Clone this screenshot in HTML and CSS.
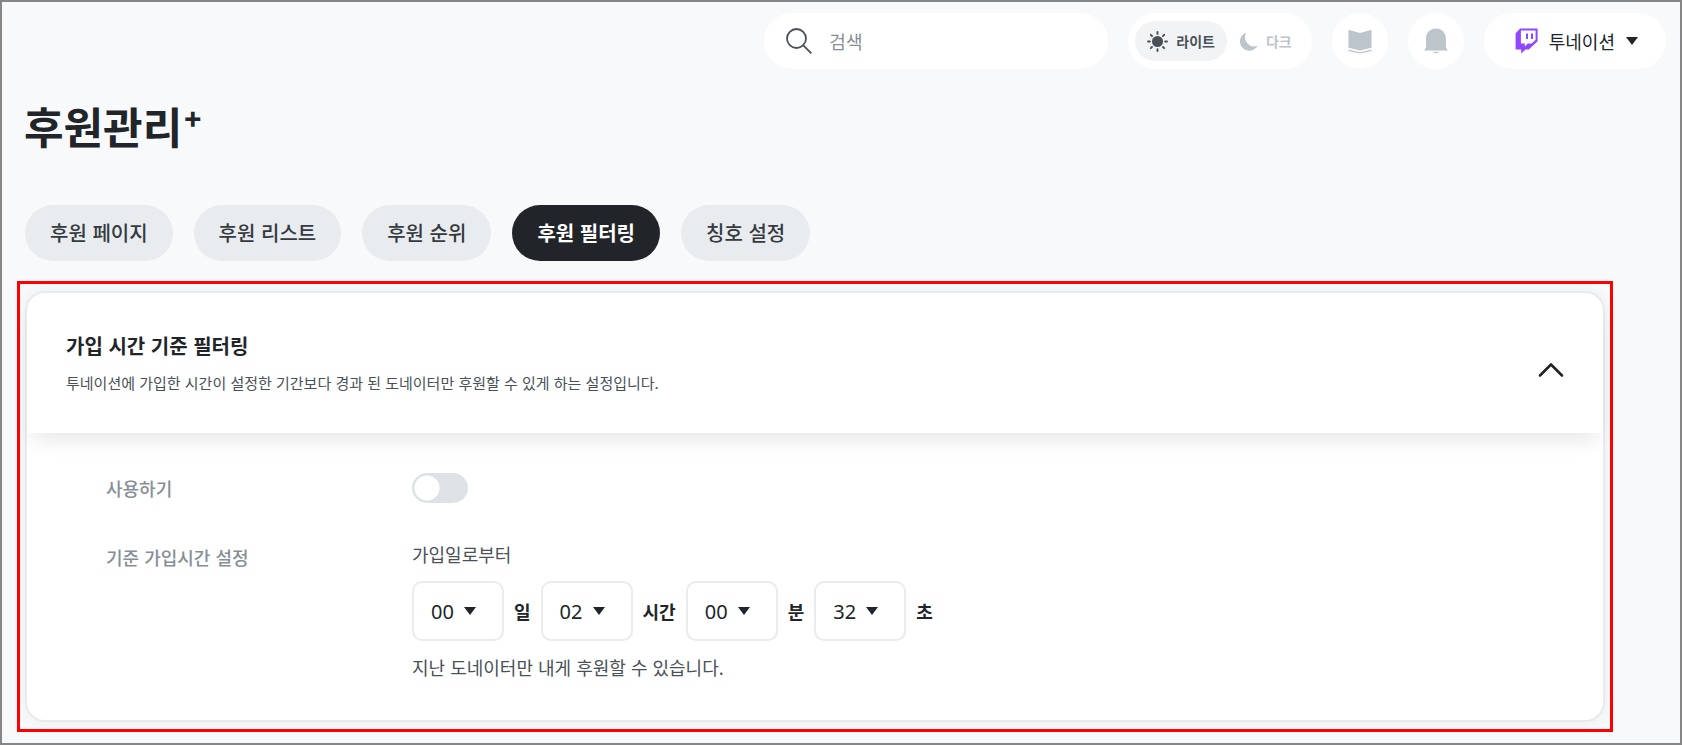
FILE: index.html
```html
<!DOCTYPE html>
<html lang="ko">
<head>
    <meta charset="UTF-8">
    <meta name="viewport" content="width=device-width, initial-scale=1.0">
    <title>후원관리</title>
    <link rel="stylesheet" href="styles.css">
</head>
<body>
    <div class="page">
        <header class="topbar">
            <label class="search">
                <svg class="search-icon" viewBox="0 0 26 26" fill="none" stroke="#495057" stroke-width="1.8">
                    <circle cx="10.5" cy="10.5" r="9.5"/>
                    <path d="M17.3 17.3L25.3 25.3"/>
                </svg>
                <input class="search-input" type="text" placeholder="검색" aria-label="검색">
            </label>

            <div class="theme">
                <button class="theme-btn active" type="button">
                    <svg width="21" height="21" viewBox="0 0 21 21" fill="#495057" stroke="#495057" stroke-width="1.9" stroke-linecap="round">
                        <circle cx="10.5" cy="10.5" r="4.6"/>
                        <path d="M10.5 1v1.9M10.5 18.1V20M1 10.5h1.9M18.1 10.5H20M3.8 3.8l1.2 1.2M16 16l1.2 1.2M17.2 3.8L16 5M5 16l-1.2 1.2"/>
                    </svg>
                    <span>라이트</span>
                </button>
                <button class="theme-btn" type="button">
                    <svg width="18" height="19" viewBox="0 0 18 19" fill="#bcc4cc">
                        <path d="M6.4 0.6A9.3 9.3 0 1 0 17.6 13.6A9 9 0 0 1 6.4 0.6z"/>
                    </svg>
                    <span>다크</span>
                </button>
            </div>

            <button class="round-btn" type="button" aria-label="가이드">
                <svg width="24" height="25" viewBox="0 0 24 25" fill="#bcc4cc">
                    <path d="M0.5 0.8L12 4L23.5 0.8V18.8L12 21.4L0.5 18.8z"/>
                    <path d="M0.5 20.5L12 23.2L23.5 20.5V21.9L12 24.6L0.5 21.9z"/>
                </svg>
            </button>
            <button class="round-btn" type="button" aria-label="알림">
                <svg width="24" height="26" viewBox="0 0 24 26" fill="#bcc4cc">
                    <path d="M2 20V11C2 4.5 6.4 0.4 12 0.4S22 4.5 22 11V20L23.5 21.2V22.4H0.5V21.2z"/>
                    <path d="M8.4 23.8h7.2A4 2.4 0 0 1 8.4 23.8z"/>
                </svg>
            </button>

            <button class="profile" type="button">
                <svg width="23" height="26" viewBox="0 0 23 26">
                    <path fill="#9146ff" fill-rule="evenodd" d="M5.2 0.6H22.6V13.2L13.8 21.6H10.6L6.2 25.6V21.6H0.6V5.2zM5.9 2.6V15.6H9.8V18.6L12.8 15.6H16.6L20.6 11.8V2.6z"/>
                    <path fill="#9146ff" d="M11 5.6h2v5.4h-2zM16 5.6h2v5.4h-2z"/>
                </svg>
                <span>투네이션</span>
                <i class="caret"></i>
            </button>
        </header>

        <h1 class="title">후원관리<sup>+</sup></h1>

        <nav class="tabs">
            <a class="tab" href="#page">후원 페이지</a>
            <a class="tab" href="#list">후원 리스트</a>
            <a class="tab" href="#rank">후원 순위</a>
            <a class="tab active" href="#filter">후원 필터링</a>
            <a class="tab" href="#badge">칭호 설정</a>
        </nav>

        <main class="highlight">
            <section class="card">
                <div class="card-header">
                    <div>
                        <h2>가입 시간 기준 필터링</h2>
                        <p>투네이션에 가입한 시간이 설정한 기간보다 경과 된 도네이터만 후원할 수 있게 하는 설정입니다.</p>
                    </div>
                    <button class="fold-btn" type="button" aria-label="접기">
                        <svg width="26" height="16" viewBox="0 0 26 16" fill="none" stroke="#212529" stroke-width="2.6" stroke-linecap="round" stroke-linejoin="round">
                            <path d="M2 13.5L13 2.5L24 13.5"/>
                        </svg>
                    </button>
                </div>

                <div class="card-body">
                    <div class="row">
                        <label class="row-label" for="use">사용하기</label>
                        <input class="switch" type="checkbox" id="use">
                    </div>
                    <div class="row">
                        <span class="row-label time-label">기준 가입시간 설정</span>
                        <div>
                            <p class="text">가입일로부터</p>
                            <div class="times">
                                <div class="select">
                                    <select id="day"><option>00</option></select>
                                    <i class="caret"></i>
                                </div>
                                <label for="day">일</label>
                                <div class="select">
                                    <select id="hour"><option>02</option></select>
                                    <i class="caret"></i>
                                </div>
                                <label for="hour">시간</label>
                                <div class="select">
                                    <select id="minute"><option>00</option></select>
                                    <i class="caret"></i>
                                </div>
                                <label for="minute">분</label>
                                <div class="select">
                                    <select id="second"><option>32</option></select>
                                    <i class="caret"></i>
                                </div>
                                <label for="second">초</label>
                            </div>
                            <p class="text">지난 도네이터만 내게 후원할 수 있습니다.</p>
                        </div>
                    </div>
                </div>
            </section>
        </main>
    </div>
</body>
</html>
```
FILE: styles.css
```css
* {
    box-sizing: border-box;
}

body {
    margin: 0;
    font-family: "Noto Sans CJK KR", sans-serif;
    color: #212529;
    background-color: #f8f9fb;
}

button,
input,
select {
    font-family: inherit;
    color: inherit;
    border: none;
    background: none;
    padding: 0;
    margin: 0;
}

button {
    cursor: pointer;
}

h1,
h2,
p {
    margin: 0;
}

.page {
    min-height: 100vh;
    border: 2px solid #868686;
    padding-bottom: 10px;
}

/* top bar */
.topbar {
    display: flex;
    justify-content: flex-end;
    gap: 20px;
    padding: 11px 14px 0;
}

.search {
    display: flex;
    align-items: center;
    gap: 17px;
    width: 344px;
    height: 56px;
    padding: 0 22px;
    border-radius: 28px;
    background-color: #fff;
}

.search-icon {
    flex: none;
    width: 26px;
    height: 26px;
}

.search-input {
    width: 100%;
    font-size: 18px;
    outline: none;
}

.search-input::placeholder {
    color: #868e96;
    opacity: 1;
}

.theme {
    display: flex;
    align-items: center;
    height: 56px;
    padding: 0 7px;
    border-radius: 28px;
    background-color: #fff;
}

.theme-btn {
    display: flex;
    align-items: center;
    gap: 8px;
    height: 40px;
    padding: 0 13px;
    border-radius: 20px;
    font-size: 14px;
    font-weight: 700;
    color: #bcc4cc;
}

.theme-btn.active {
    padding: 0 12px;
    color: #495057;
    background-color: #f1f3f5;
}

.round-btn {
    display: flex;
    align-items: center;
    justify-content: center;
    width: 56px;
    height: 56px;
    border-radius: 50%;
    background-color: #fff;
}

.profile {
    display: flex;
    align-items: center;
    gap: 11px;
    height: 56px;
    padding: 0 28px 0 31px;
    border-radius: 28px;
    font-size: 18px;
    background-color: #fff;
}

.caret {
    border: 6px solid transparent;
    border-top: 8px solid #212529;
    border-bottom: none;
}

/* title and tabs */
.title {
    padding: 25px 22px 0;
    font-size: 43px;
    line-height: 62px;
    font-weight: 700;
}

.title sup {
    padding-left: 2px;
    font-size: 28px;
    line-height: 1;
    font-weight: 900;
    vertical-align: 14px;
}

.tabs {
    display: flex;
    flex-wrap: wrap;
    gap: 21px;
    padding: 49px 23px 20px;
}

.tab {
    padding: 0 25px;
    border-radius: 28px;
    font-size: 20px;
    line-height: 56px;
    font-weight: 500;
    color: #343a40;
    text-decoration: none;
    background-color: #e9ecef;
}

.tab.active {
    font-weight: 700;
    color: #fff;
    background-color: #212529;
}

/* filtering card */
.highlight {
    margin: 0 67px 0 15px;
    padding: 7px 5px;
    border: 3px solid #f00;
}

.card {
    border: 2px solid #e8eaec;
    border-radius: 20px;
    background-color: #fff;
    box-shadow: 0 0 16px rgba(0, 0, 0, 0.05);
}

.card-header {
    display: flex;
    align-items: center;
    justify-content: space-between;
    padding: 38px 39px;
    border-radius: 20px 20px 0 0;
    box-shadow: 0 14px 20px -6px rgba(0, 0, 0, 0.09);
}

.card-header h2 {
    font-size: 20px;
    line-height: 30px;
    font-weight: 700;
}

.card-header p {
    padding-top: 10px;
    font-size: 15px;
    line-height: 24px;
    color: #495057;
}

.fold-btn {
    padding-top: 18px;
}

.card-body {
    display: flex;
    flex-direction: column;
    gap: 36px;
    padding: 40px 79px 38px;
}

.row {
    display: flex;
    align-items: flex-start;
}

.row-label {
    flex: none;
    width: 306px;
    font-size: 18px;
    line-height: 30px;
    font-weight: 500;
    color: #868e96;
}

.time-label {
    padding-top: 3px;
}

.switch {
    appearance: none;
    width: 56px;
    height: 30px;
    border-radius: 15px;
    background: radial-gradient(circle at 15px 15px, #fff 12px, #dee2e6 13px);
}

.text {
    font-size: 18px;
    line-height: 30px;
    color: #495057;
}

.times {
    display: flex;
    align-items: center;
    gap: 10px;
    padding: 12px 0 11px;
    font-size: 18px;
    font-weight: 700;
}

.select {
    position: relative;
}

.select select {
    appearance: none;
    width: 92px;
    height: 60px;
    padding-left: 17px;
    border: 2px solid #e9ebed;
    border-radius: 10px;
    font-family: "Noto Sans", sans-serif;
    font-size: 20px;
}

/* arrow drawn over the select box */
.select .caret {
    position: absolute;
    top: 26px;
    right: 28px;
    pointer-events: none;
}
```
